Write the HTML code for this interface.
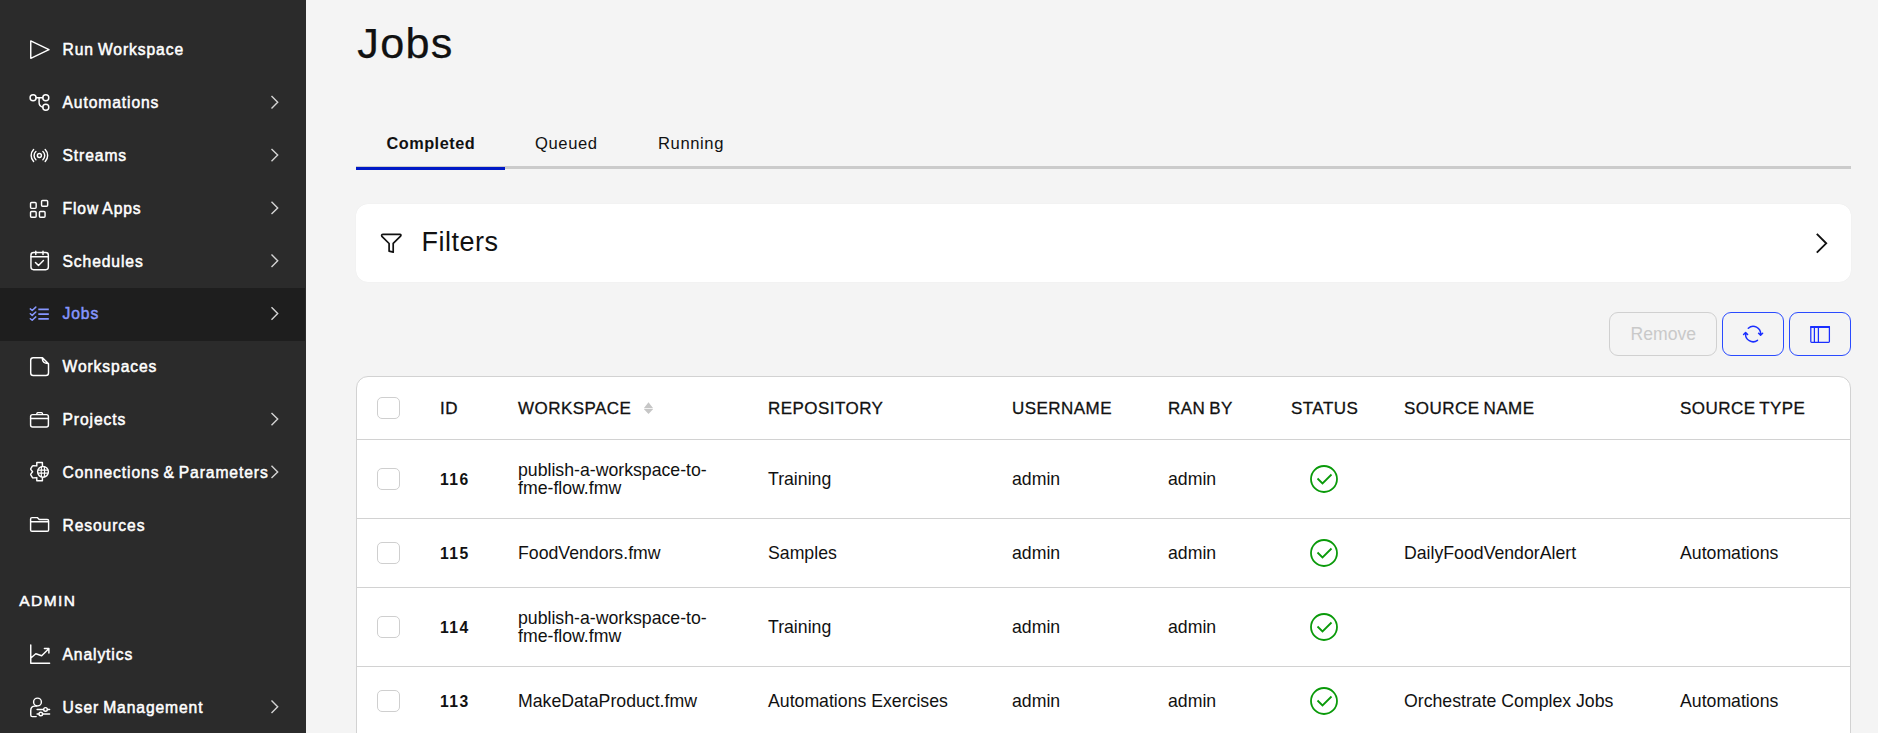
<!DOCTYPE html>
<html><head><meta charset="utf-8">
<style>
*{box-sizing:border-box;margin:0;padding:0}
html,body{width:1878px;height:733px;overflow:hidden;background:#f4f4f4;font-family:"Liberation Sans",sans-serif;color:#111}
.abs{position:absolute}
#side{position:absolute;left:0;top:0;width:306px;height:733px;background:#2b2b2b}
#side .lb{position:absolute;left:62.5px;margin-top:-0.7px;line-height:18px;white-space:nowrap;color:#fff;font-weight:normal;font-size:15.65px;-webkit-text-stroke:0.5px #fff;letter-spacing:0.9px;word-spacing:-1.2px}
#side .lb.act{color:#8696ff;-webkit-text-stroke-color:#8696ff}
#title{position:absolute;left:357.3px;top:18.1px;font-size:43.2px;line-height:50px;color:#111;letter-spacing:1.25px;-webkit-text-stroke:0.25px #111}
.tab{position:absolute;top:133.6px;font-size:16.6px;line-height:20px;color:#111;white-space:nowrap;letter-spacing:0.6px}
#tabline{position:absolute;left:356px;top:166px;width:1495px;height:3px;background:#cbcbcb}
#tabact{position:absolute;left:356px;top:167px;width:149px;height:3px;background:#0019c6}
#filters{position:absolute;left:356px;top:204px;width:1495px;height:78px;background:#fff;border-radius:12px;box-shadow:0 0 1px rgba(0,0,0,.08)}
.btn{position:absolute;top:312px;height:44px;border-radius:9px;border:1.5px solid #2a4bff}
#tbl{position:absolute;left:356px;top:376px;width:1495px;height:400px;background:#fff;border:1px solid #d2d2d2;border-radius:12px;overflow:hidden}
.hd{position:absolute;top:21.5px;word-spacing:-1.1px;font-size:17px;line-height:20px;white-space:nowrap;color:#111;letter-spacing:0.45px;-webkit-text-stroke:0.3px #111}
.row{position:absolute;left:0;width:1495px;border-top:1px solid #d2d2d2}
.cell{position:absolute;font-size:17.7px;line-height:18.3px;white-space:nowrap;color:#111}
.cb{position:absolute;left:20px;width:23px;height:22px;border:1px solid #cfcfcf;border-radius:5px;background:#fff}
.st{position:absolute;left:952px;width:30px;height:30px}
</style></head><body>
<div id="side">
  <div class="act" style="position:absolute;left:0;top:288px;width:305px;height:52.8px;background:#1e1e1e"></div>
  <div class="lb" style="top:42.0px">Run Workspace</div>
  <div class="lb" style="top:94.8px">Automations</div>
  <div class="lb" style="top:147.6px">Streams</div>
  <div class="lb" style="top:200.4px">Flow Apps</div>
  <div class="lb" style="top:253.2px">Schedules</div>
  <div class="lb act" style="top:306.0px">Jobs</div>
  <div class="lb" style="top:358.8px">Workspaces</div>
  <div class="lb" style="top:411.6px">Projects</div>
  <div class="lb" style="top:464.4px">Connections &amp; Parameters</div>
  <div class="lb" style="top:517.2px">Resources</div>
  <div class="lb" style="left:19.3px;top:593px;font-size:15.5px;letter-spacing:1.4px">ADMIN</div>
  <div class="lb" style="top:646.4px">Analytics</div>
  <div class="lb" style="top:699.3px">User Management</div>
  <svg style="position:absolute;left:0;top:0" width="306" height="733" viewBox="0 0 306 733">
    <path d="M271.5 96.1 L277.7 102.3 L271.5 108.5 M271.5 148.9 L277.7 155.1 L271.5 161.3 M271.5 201.7 L277.7 207.9 L271.5 214.1 M271.5 254.5 L277.7 260.7 L271.5 266.9 M271.5 307.3 L277.7 313.5 L271.5 319.7 M271.5 412.9 L277.7 419.1 L271.5 425.3 M271.5 465.7 L277.7 471.9 L271.5 478.1 M271.5 700.6 L277.7 706.8 L271.5 713.0 " fill="none" stroke="#d4d4d4" stroke-width="1.4"/>
    <g fill="none" stroke="#fff" stroke-width="1.45" stroke-linecap="round" stroke-linejoin="round">
      <path d="M30.75 40.9 L49 49.6 L30.75 58.3 Z"/>
      <circle cx="33.1" cy="97.8" r="3"/><circle cx="45.8" cy="97.8" r="3"/><circle cx="45.8" cy="107.2" r="3"/>
      <path d="M36.1 97.8 H42.8 M39.1 98.2 V102.8 Q39.1 106.2 42.8 107.2"/>
      <circle cx="39.4" cy="155.5" r="2"/>
      <path d="M33.6 149.6 A8.6 8.6 0 0 0 33.6 161.6 M45.2 149.6 A8.6 8.6 0 0 1 45.2 161.6 M35.9 151.5 A5.5 5.5 0 0 0 35.9 159.7 M42.9 151.5 A5.5 5.5 0 0 1 42.9 159.7"/>
      <rect x="30.55" y="202.55" width="5.6" height="5.8" rx="1"/><rect x="41.55" y="200.45" width="6.1" height="5.7" rx="1"/>
      <rect x="30.55" y="211.55" width="5.6" height="5.6" rx="1"/><rect x="39.45" y="211.55" width="5.6" height="5.6" rx="1"/>
      <rect x="30.95" y="252.55" width="17.4" height="17.1" rx="2.6"/>
      <path d="M35.8 251.2 V254.6 M43 251.2 V254.6 M30.95 256.7 H48.35 M35.5 262.4 L38.5 265.4 L43.4 260.6"/>
      <path d="M33.2 357.8 H42.5 L48.5 363.8 V373 A2.5 2.5 0 0 1 46 375.5 H33.2 A2.5 2.5 0 0 1 30.7 373 V360.3 A2.5 2.5 0 0 1 33.2 357.8 Z M42.2 358.2 Q42.5 363.3 48.1 363.6"/>
      <rect x="30.6" y="414.6" width="17.8" height="12.4" rx="2"/>
      <path d="M36.9 414.3 V413.4 Q36.9 412.6 37.7 412.6 H41.6 Q42.4 412.6 42.4 413.4 V414.3 M30.6 418.5 H48.4"/>
      <path d="M42.4 465.6 V462.4 H36.8 V465.9 L33.2 465.6 Q32.6 465.6 32.3 466.1 L30.8 468.6 Q30.5 469.1 30.9 469.6 L32.6 471.7 L30.9 473.9 Q30.5 474.4 30.8 474.9 L32.3 477.4 Q32.6 477.9 33.2 477.9 L36.8 477.6 V480.7 H42.4 V478"/>
      <circle cx="43" cy="471.8" r="5.4"/>
      <path d="M41.5 466.8 Q40.9 471.8 41.5 476.8 M44.3 466.8 Q44.9 471.8 44.3 476.8 M38.2 470.1 H47.8 M38.2 473.1 H47.8" stroke-width="1.1"/>
      <path d="M30.6 519 Q30.6 517.6 32 517.6 H37.3 L39.2 519.5 H47.2 Q48.6 519.5 48.6 520.9 V529.9 Q48.6 531.3 47.2 531.3 H32 Q30.6 531.3 30.6 529.9 Z M30.6 521.8 H48.6"/>
      <path d="M30.75 644.9 V663.3 H49.6 M31.2 657.7 L35.8 653.8 L41.7 655.8 L48 649.5 M44.4 648.5 H48.9 V653.1"/>
      <circle cx="37.5" cy="702" r="3.9"/>
      <path d="M36.2 716.6 H32.4 Q30.75 716.6 30.75 715 V710.4 Q30.75 706.1 35 706.1 H36.8 M37.1 709.4 H49.6 M37.1 714 H49.6"/>
      <circle cx="45.5" cy="709.4" r="1.8" fill="#2b2b2b"/><circle cx="40.8" cy="714" r="1.8" fill="#2b2b2b"/>
    </g>
    <g fill="none" stroke="#8696ff" stroke-width="1.5" stroke-linecap="round" stroke-linejoin="round">
      <path d="M30.3 308.9 L32.2 310.5 L35.8 307.1 M30.3 313.8 L32.2 315.4 L35.8 312 M30.3 318.7 L32.2 320.3 L35.8 316.9"/>
      <path d="M38.3 309.4 H48.8 M38.3 314.1 H48.8 M38.3 318.9 H48.8" stroke-width="1.7" stroke-linecap="butt"/>
    </g>
  </svg>
</div>
<div id="title">Jobs</div>
<div class="tab" style="left:386.5px;top:133px;font-weight:bold;font-size:16.3px;letter-spacing:0.5px">Completed</div>
<div class="tab" style="left:535px">Queued</div>
<div class="tab" style="left:658px">Running</div>
<div id="tabline"></div>
<div id="tabact"></div>

<div id="filters">
  <svg class="abs" style="left:20px;top:24px" width="30" height="30" viewBox="0 0 30 30"><path d="M7.2 6.3 H23.8 Q25.6 6.4 24.6 8.2 L17.2 15.3 V24.2 L13.1 23.2 V15.5 L5.9 8.3 Q4.9 6.4 7.2 6.3 Z" fill="none" stroke="#111" stroke-width="1.7" stroke-linejoin="round"/></svg>
  <div class="abs" style="left:65.5px;top:22px;font-size:27px;line-height:32px;letter-spacing:0.5px;color:#111">Filters</div>
  <svg class="abs" style="left:1444px;top:14px" width="40" height="40" viewBox="0 0 40 40"><path d="M16.8 15.9 L26.2 25.3 L16.8 34.7" fill="none" stroke="#111" stroke-width="1.9"/></svg>
</div>

<div class="btn" style="left:1609px;width:108px;border:1px solid #d0d0d0">
  <div class="abs" style="left:20.5px;top:11px;font-size:17.6px;line-height:20px;color:#c9c9c9">Remove</div>
</div>
<div class="btn" style="left:1722px;width:62px"></div>
<div class="btn" style="left:1789px;width:62px"></div>
<svg class="abs" style="left:1738px;top:320px" width="30" height="28" viewBox="0 0 30 28"><g fill="none" stroke="#1a2eff" stroke-width="1.5" stroke-linecap="round" stroke-linejoin="round"><path d="M10.3 8.2 A7.45 7.45 0 0 1 22.6 14.4 M20.6 13.3 L22.6 15.2 L24.6 13.3 M19.5 20.3 A7.45 7.45 0 0 1 7.7 13.3 M5.6 14.5 L7.6 12.5 L9.6 14.5"/></g></svg>
<svg class="abs" style="left:1805px;top:320px" width="30" height="28" viewBox="0 0 30 28"><g fill="none" stroke="#1a2eff" stroke-width="1.25"><rect x="5.8" y="6.5" width="18.6" height="15.8" rx="0.8"/><path d="M9.4 7 V22.3 M13.4 7 V22.3"/></g><rect x="5.2" y="5.9" width="19.8" height="2.1" rx="0.6" fill="#1a2eff"/></svg>

<div id="tbl">
  <div class="cb" style="top:20px"></div>
  <div class="hd" style="left:83px">ID</div>
  <div class="hd" style="left:161px">WORKSPACE</div>
  <svg class="abs" style="left:285px;top:25px" width="14" height="14" viewBox="0 0 14 14"><path d="M6.5 0.3 L11.2 6.3 H1.8 Z M1.8 7 H11.2 L6.5 12 Z" fill="#c6c6c6"/></svg>
  <div class="hd" style="left:411px">REPOSITORY</div>
  <div class="hd" style="left:655px">USERNAME</div>
  <div class="hd" style="left:811px">RAN BY</div>
  <div class="hd" style="left:934px">STATUS</div>
  <div class="hd" style="left:1047px">SOURCE NAME</div>
  <div class="hd" style="left:1323px">SOURCE TYPE</div>

  <div class="row" style="top:62px;height:79px">
    <div class="cb" style="top:28px"></div>
    <div class="cell" style="left:83px;top:31px;font-weight:bold;font-size:15.7px;letter-spacing:1.45px">116</div>
    <div class="cell" style="left:161px;top:21px">publish-a-workspace-to-<br>fme-flow.fmw</div>
    <div class="cell" style="left:411px;top:30px">Training</div>
    <div class="cell" style="left:655px;top:30px">admin</div>
    <div class="cell" style="left:811px;top:30px">admin</div>
    <svg class="st" style="top:24px" viewBox="0 0 30 30"><circle cx="15" cy="15" r="13" fill="none" stroke="#0a9a0a" stroke-width="1.8"/><path d="M8.5 14.5 L13.5 19.5 L22.5 10.5" fill="none" stroke="#0a9a0a" stroke-width="1.8"/></svg>
  </div>
  <div class="row" style="top:141px;height:69px">
    <div class="cb" style="top:23px"></div>
    <div class="cell" style="left:83px;top:26px;font-weight:bold;font-size:15.7px;letter-spacing:1.45px">115</div>
    <div class="cell" style="left:161px;top:25px">FoodVendors.fmw</div>
    <div class="cell" style="left:411px;top:25px">Samples</div>
    <div class="cell" style="left:655px;top:25px">admin</div>
    <div class="cell" style="left:811px;top:25px">admin</div>
    <svg class="st" style="top:19px" viewBox="0 0 30 30"><circle cx="15" cy="15" r="13" fill="none" stroke="#0a9a0a" stroke-width="1.8"/><path d="M8.5 14.5 L13.5 19.5 L22.5 10.5" fill="none" stroke="#0a9a0a" stroke-width="1.8"/></svg>
    <div class="cell" style="left:1047px;top:25px">DailyFoodVendorAlert</div>
    <div class="cell" style="left:1323px;top:25px">Automations</div>
  </div>
  <div class="row" style="top:210px;height:79px">
    <div class="cb" style="top:28px"></div>
    <div class="cell" style="left:83px;top:31px;font-weight:bold;font-size:15.7px;letter-spacing:1.45px">114</div>
    <div class="cell" style="left:161px;top:21px">publish-a-workspace-to-<br>fme-flow.fmw</div>
    <div class="cell" style="left:411px;top:30px">Training</div>
    <div class="cell" style="left:655px;top:30px">admin</div>
    <div class="cell" style="left:811px;top:30px">admin</div>
    <svg class="st" style="top:24px" viewBox="0 0 30 30"><circle cx="15" cy="15" r="13" fill="none" stroke="#0a9a0a" stroke-width="1.8"/><path d="M8.5 14.5 L13.5 19.5 L22.5 10.5" fill="none" stroke="#0a9a0a" stroke-width="1.8"/></svg>
  </div>
  <div class="row" style="top:289px;height:79px">
    <div class="cb" style="top:23px"></div>
    <div class="cell" style="left:83px;top:26px;font-weight:bold;font-size:15.7px;letter-spacing:1.45px">113</div>
    <div class="cell" style="left:161px;top:25px">MakeDataProduct.fmw</div>
    <div class="cell" style="left:411px;top:25px">Automations Exercises</div>
    <div class="cell" style="left:655px;top:25px">admin</div>
    <div class="cell" style="left:811px;top:25px">admin</div>
    <svg class="st" style="top:19px" viewBox="0 0 30 30"><circle cx="15" cy="15" r="13" fill="none" stroke="#0a9a0a" stroke-width="1.8"/><path d="M8.5 14.5 L13.5 19.5 L22.5 10.5" fill="none" stroke="#0a9a0a" stroke-width="1.8"/></svg>
    <div class="cell" style="left:1047px;top:25px">Orchestrate Complex Jobs</div>
    <div class="cell" style="left:1323px;top:25px">Automations</div>
  </div>
</div>
</body></html>
